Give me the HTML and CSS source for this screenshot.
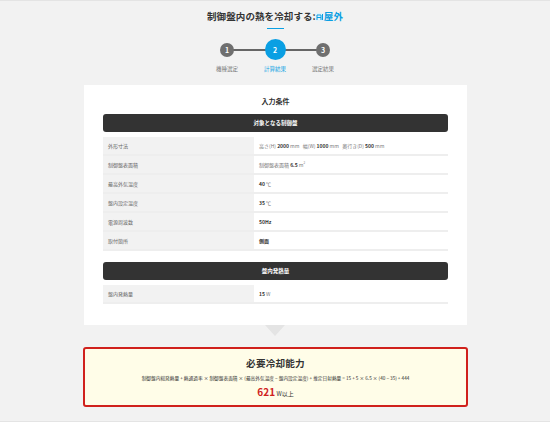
FILE: index.html
```html
<!doctype html>
<html lang="ja">
	<head>
		<meta charset="utf-8" />
		<title>制御盤内の熱を冷却する</title>
		<link rel="stylesheet" href="styles.css">
	</head>
	<body>
		<header class="page_head">
			<h1 class="page_title">制御盤内の熱を冷却する:<span class="page_title_place"><svg class="page_title_mark" viewBox="0 0 8 8"><rect width="8" height="8" fill="#e3f3fb"/><path d="M1 2h4v5M1 4.500h4M1 2v5M6.500 1v6" fill="none" stroke="#0a9fe3" stroke-width="1"/></svg>屋外</span></h1>
			<div class="page_title_rule"></div>
		</header>
		<ol class="steps">
			<li class="step">
				<span class="step_num">1</span>
				<span class="step_label">機種選定</span>
			</li>
			<li class="step step_current">
				<span class="step_num">2</span>
				<span class="step_label">計算結果</span>
			</li>
			<li class="step">
				<span class="step_num">3</span>
				<span class="step_label">選定結果</span>
			</li>
		</ol>
		<section class="card">
			<h2 class="card_title">入力条件</h2>
			<h3 class="bar">対象となる制御盤</h3>
			<div class="rows">
				<div class="row">
					<div class="row_name">外形寸法</div>
					<div class="row_value light">高さ(H) <b>2000</b> mm&nbsp;&nbsp; 幅(W) <b>1000</b> mm&nbsp;&nbsp; 奥行き(D) <b>500</b> mm</div>
				</div>
				<div class="row">
					<div class="row_name">制御盤表面積</div>
					<div class="row_value light">制御盤表面積 <b>6.5</b> m<sup>2</sup></div>
				</div>
				<div class="row">
					<div class="row_name">最高外気温度</div>
					<div class="row_value light"><b>40</b> ℃</div>
				</div>
				<div class="row">
					<div class="row_name">盤内設定温度</div>
					<div class="row_value light"><b>35</b> ℃</div>
				</div>
				<div class="row">
					<div class="row_name">電源周波数</div>
					<div class="row_value"><b>50Hz</b></div>
				</div>
				<div class="row">
					<div class="row_name">取付箇所</div>
					<div class="row_value"><b>側面</b></div>
				</div>
			</div>
			<h3 class="bar bar_second">盤内発熱量</h3>
			<div class="rows">
				<div class="row">
					<div class="row_name">盤内発熱量</div>
					<div class="row_value light"><b>15</b> W</div>
				</div>
			</div>
		</section>
		<div class="arrow"></div>
		<section class="result">
			<h2 class="result_title">必要冷却能力</h2>
			<p class="result_formula">制御盤内総発熱量 + 熱通過率 × 制御盤表面積 × (最高外気温度 − 盤内設定温度) + 推定日射熱量 = 15 + 5 × 6.5 × (40 − 35) + 444</p>
			<p class="result_value"><span class="result_num">621</span> W以上</p>
		</section>
	</body>
</html>
```

FILE: styles.css
```css
* {
	box-sizing : border-box;
}
html, body {
	height : 100%;
}
body {
	margin : 0;
	padding-top : 1px;
	background-color : #f2f2f2;
	border-top : 1px solid #e4e4e4;
	border-bottom : 1px solid #e4e4e4;
	color : #333;
	font-family : "Noto Sans CJK JP", "Noto Sans", sans-serif;
	overflow : hidden;
}
.page_head {
	padding-top : 7px;
	text-align : center;
}
.page_title {
	margin : 0;
	font-size : 9.5px;
	line-height : 15px;
	font-weight : 700;
	letter-spacing : 0.1px;
}
.page_title_place {
	color : #0a9fe3;
}
.page_title_mark {
	display : inline-block;
	width : 8px;
	height : 8px;
	vertical-align : -1px;
}
.page_title_rule {
	width : 17px;
	height : 1px;
	margin : 4px auto 0;
	background-color : #0a9fe3;
}
.steps {
	display : flex;
	justify-content : center;
	margin : 0;
	padding : 10px 0 0;
	list-style : none;
}
.step {
	position : relative;
	display : flex;
	flex-direction : column;
	align-items : center;
	width : 48px;
}
.step::before {
	content : "";
	position : absolute;
	top : 10px;
	left : 24px;
	width : 48px;
	height : 2px;
	background-color : #666;
}
.step:last-child::before {
	display : none;
}
.step_num {
	position : relative;
	display : flex;
	align-items : center;
	justify-content : center;
	width : 14px;
	height : 14px;
	margin : 3.5px 0;
	border-radius : 50%;
	background-color : #6f6f6f;
	color : #fff;
	font-size : 7px;
	font-weight : 700;
}
.step_label {
	margin-top : 5px;
	color : #777;
	font-size : 5.5px;
	line-height : 8px;
	white-space : nowrap;
}
.step_current .step_num {
	width : 21px;
	height : 21px;
	margin : 0;
	background-color : #0a9fe3;
}
.step_current .step_label {
	color : #0a9fe3;
}
.card {
	width : 383px;
	height : 240px;
	margin : 12px 0 0 84px;
	padding : 11px 19px 0;
	background-color : #fff;
}
.card_title {
	margin : 0 0 7px;
	font-size : 7px;
	line-height : 11px;
	font-weight : 700;
	text-align : center;
}
.bar {
	height : 18px;
	margin : 0;
	border-radius : 3px;
	background-color : #333;
	color : #fff;
	font-size : 5.5px;
	line-height : 18px;
	font-weight : 700;
	text-align : center;
}
.bar_second {
	margin-top : 11px;
}
.rows {
	margin-top : 5px;
}
.row {
	display : flex;
	height : 19px;
	border-bottom : 2px solid #eee;
	font-size : 5px;
	line-height : 17px;
}
.row_name {
	width : 151px;
	padding-left : 5px;
	background-color : #f2f2f2;
	color : #666;
}
.row_value {
	flex : 1;
	padding-left : 5px;
	color : #333;
}
.row_value.light {
	color : #777;
}
.row_value b {
	color : #333;
}
.row_value sup {
	font-size : 3px;
	line-height : 0;
}
.arrow {
	width : 0;
	height : 0;
	margin : 0 0 0 265px;
	border-top : 11px solid #e4e4e4;
	border-left : 10.5px solid transparent;
	border-right : 10.5px solid transparent;
}
.result {
	width : 385px;
	height : 60px;
	margin : 11px 0 0 83px;
	padding-top : 7px;
	border : 2px solid #d0211c;
	border-radius : 3px;
	background-color : #fffde8;
	text-align : center;
}
.result_title {
	margin : 0;
	font-size : 9.6px;
	line-height : 15px;
	font-weight : 700;
	letter-spacing : 0.2px;
}
.result_formula {
	margin : 3px 0 0;
	font-size : 4.7px;
	line-height : 8px;
}
.result_value {
	margin : 3px 0 0;
	font-size : 6px;
	line-height : 14px;
}
.result_num {
	color : #d0211c;
	font-size : 10px;
	font-weight : 700;
}
```
